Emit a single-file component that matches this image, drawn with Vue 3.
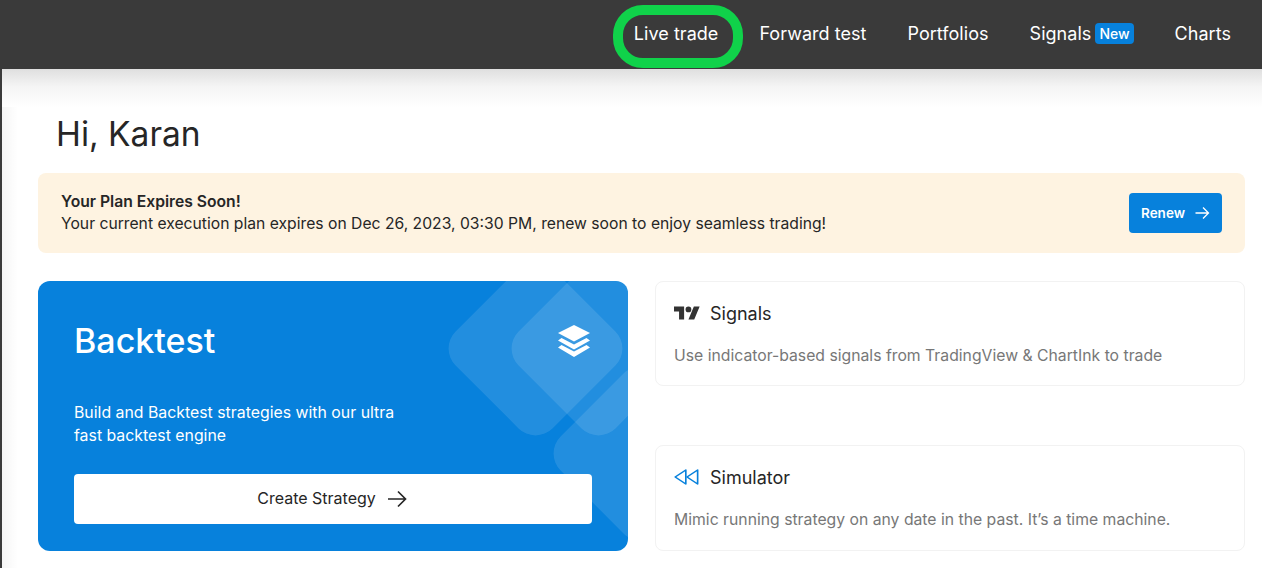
<template>
  <div class="page">
    <header class="topbar">
      <nav class="nav">
        <a class="nav-item nav-item-ringed">
          Live trade
          <span class="ring"></span>
        </a>
        <a class="nav-item">Forward test</a>
        <a class="nav-item">Portfolios</a>
        <a class="nav-item">Signals <span class="badge">New</span></a>
        <a class="nav-item">Charts</a>
      </nav>
    </header>

    <main class="main">
      <h1 class="greeting">Hi, Karan</h1>

      <section class="notice">
        <div>
          <div class="notice-title">Your Plan Expires Soon!</div>
          <div class="notice-text">
            Your current execution plan expires on Dec 26, 2023, 03:30 PM, renew soon to enjoy seamless trading!
          </div>
        </div>
        <button type="button" class="renew">
          Renew
          <svg width="16" height="16" viewBox="0 0 16 16" fill="none" stroke="currentColor" stroke-width="1.3">
            <path d="M1.5 8h13M9 2.5 14.5 8 9 13.5" />
          </svg>
        </button>
      </section>

      <section class="grid">
        <div class="backtest">
          <span class="diamond diamond-a"></span>
          <span class="diamond diamond-b"></span>
          <span class="diamond diamond-c"></span>
          <svg class="layers" width="32" height="32" viewBox="0 0 32 32" fill="#fff">
            <path d="M16 0 32 8 16 16.5 0 8Z" />
            <path d="M3.5 13 16 19.5 28.5 13 32 15.5 16 24.5 0 15.5Z" />
            <path d="M3.5 20 16 26.5 28.5 20 32 22.5 16 32 0 22.5Z" />
          </svg>
          <h2 class="backtest-title">Backtest</h2>
          <p class="backtest-text">Build and Backtest strategies with our ultra<br />fast backtest engine</p>
          <button type="button" class="create">
            <span class="create-label">Create Strategy</span>
            <svg width="24" height="24" viewBox="0 0 24 24" fill="none" stroke="currentColor" stroke-width="1.7">
              <path d="M3 12h17.5M13 4.5 20.5 12 13 19.5" />
            </svg>
          </button>
        </div>

        <div class="side">
          <div v-for="card in cards" :key="card.title" class="card">
            <div class="card-head">
              <svg v-if="card.icon === 'tv'" class="card-icon" width="26" height="14" viewBox="0 4 36 18" fill="#333">
                <path d="M14 22H7V11H0V4h14v18zM28 22h-8l7.5-18h8L28 22z" />
                <circle cx="20" cy="8" r="4" />
              </svg>
              <svg v-else class="card-icon" width="26" height="16" viewBox="1 4 22 16" preserveAspectRatio="none" fill="none" stroke="#0781dc" stroke-width="1.4" stroke-linejoin="round">
                <polygon points="11 19 2 12 11 5" />
                <polygon points="21 19 12 12 21 5" />
              </svg>
              <span class="card-title">{{ card.title }}</span>
            </div>
            <p class="card-text">{{ card.text }}</p>
          </div>
        </div>
      </section>
    </main>
  </div>
</template>

<script setup>
const cards = [
  {
    icon: 'tv',
    title: 'Signals',
    text: 'Use indicator-based signals from TradingView & ChartInk to trade'
  },
  {
    icon: 'rewind',
    title: 'Simulator',
    text: 'Mimic running strategy on any date in the past. It\u2019s a time machine.'
  }
];
</script>

<style>
html,
body {
  margin: 0;
  background: #fff;
  overflow: hidden;
}
</style>

<style scoped>
.page {
  width: 1262px;
  height: 568px;
  overflow: hidden;
  font-family: Inter, "Liberation Sans", sans-serif;
  color: #262626;
}

.topbar {
  height: 69px;
  background: #3a3a3a;
  display: flex;
  justify-content: flex-end;
}

.nav {
  display: flex;
  align-items: center;
  gap: 41px;
  padding: 0 31px 2px 0;
}

.nav-item {
  position: relative;
  color: #fff;
  font-size: 18px;
  letter-spacing: 0.04px;
  display: flex;
  align-items: center;
  gap: 4px;
}

.ring {
  position: absolute;
  left: -21px;
  right: -25px;
  top: -18px;
  bottom: -24px;
  border: 10px solid #10d24a;
  border-radius: 30px;
}

.badge {
  background: #0781dc;
  color: #fff;
  font-size: 14px;
  font-weight: 500;
  letter-spacing: 0;
  line-height: 21px;
  padding: 0 4px;
  border-radius: 4px;
}

.main {
  height: 499px;
  box-sizing: border-box;
  border-left: 2px solid #3a3a3a;
  padding: 0 17px 0 36px;
  background:
    linear-gradient(#dfdfdf, #f5f5f5 18px, #fff 38px) top / 100% 38px no-repeat,
    linear-gradient(90deg, rgba(0, 0, 0, 0.04), transparent) left / 16px 100% no-repeat,
    #fff;
}

.greeting {
  margin: 0;
  padding: 45px 0 0 18px;
  font-size: 33.5px;
  line-height: 40px;
  font-weight: 400;
}

.notice {
  margin-top: 19px;
  height: 80px;
  box-sizing: border-box;
  background: #fef3e1;
  border-radius: 8px;
  padding: 0 23px;
  display: flex;
  align-items: center;
  justify-content: space-between;
  font-size: 15.7px;
  line-height: 22px;
}

.notice-title {
  font-weight: 600;
}

.renew {
  width: 93px;
  height: 40px;
  border: 0;
  border-radius: 4px;
  background: #0781dc;
  color: #fff;
  font: 600 13.5px Inter, "Liberation Sans", sans-serif;
  display: flex;
  align-items: center;
  justify-content: center;
  gap: 9px;
}

.grid {
  margin-top: 28px;
  display: grid;
  grid-template-columns: 590px 590px;
  gap: 27px;
  height: 270px;
}

.backtest {
  position: relative;
  overflow: hidden;
  background: #0781dc;
  border-radius: 12px;
  color: #fff;
  padding: 38px 36px 27px;
  box-sizing: border-box;
  display: flex;
  flex-direction: column;
}

.diamond {
  position: absolute;
  width: 137px;
  height: 137px;
  border-radius: 24px;
  background: rgba(255, 255, 255, 0.11);
  transform: rotate(45deg);
}

.diamond-a {
  left: 428.5px;
  top: -1.5px;
}

.diamond-b {
  left: 491.5px;
  top: -1.5px;
}

.diamond-c {
  left: 533.5px;
  top: 103.5px;
}

.layers {
  position: absolute;
  left: 520px;
  top: 44px;
}

.backtest-title {
  position: relative;
  margin: 0;
  font-size: 34px;
  line-height: 44px;
  font-weight: 500;
}

.backtest-text {
  position: relative;
  margin: 38px 0 0;
  font-size: 15.85px;
  line-height: 23px;
}

.create {
  position: relative;
  margin-top: auto;
  height: 50px;
  border: 0;
  border-radius: 4px;
  background: #fff;
  color: #262626;
  font: 400 16px Inter, "Liberation Sans", sans-serif;
  display: flex;
  align-items: center;
  justify-content: center;
  gap: 9px;
}

.create-label {
  margin-bottom: 2px;
}

.side {
  display: flex;
  flex-direction: column;
  justify-content: space-between;
}

.card {
  height: 105px;
  box-sizing: border-box;
  border: 1px solid #f2f2f2;
  border-radius: 8px;
  padding: 19px 18px 0;
}

.card:last-child {
  height: 106px;
}

.card-head {
  display: flex;
  align-items: center;
  gap: 10px;
  height: 24px;
}

.card-title {
  font-size: 18px;
  font-weight: 400;
}

.card-text {
  margin: 19px 0 0;
  font-size: 15.75px;
  line-height: 24px;
  color: #777;
}
</style>
